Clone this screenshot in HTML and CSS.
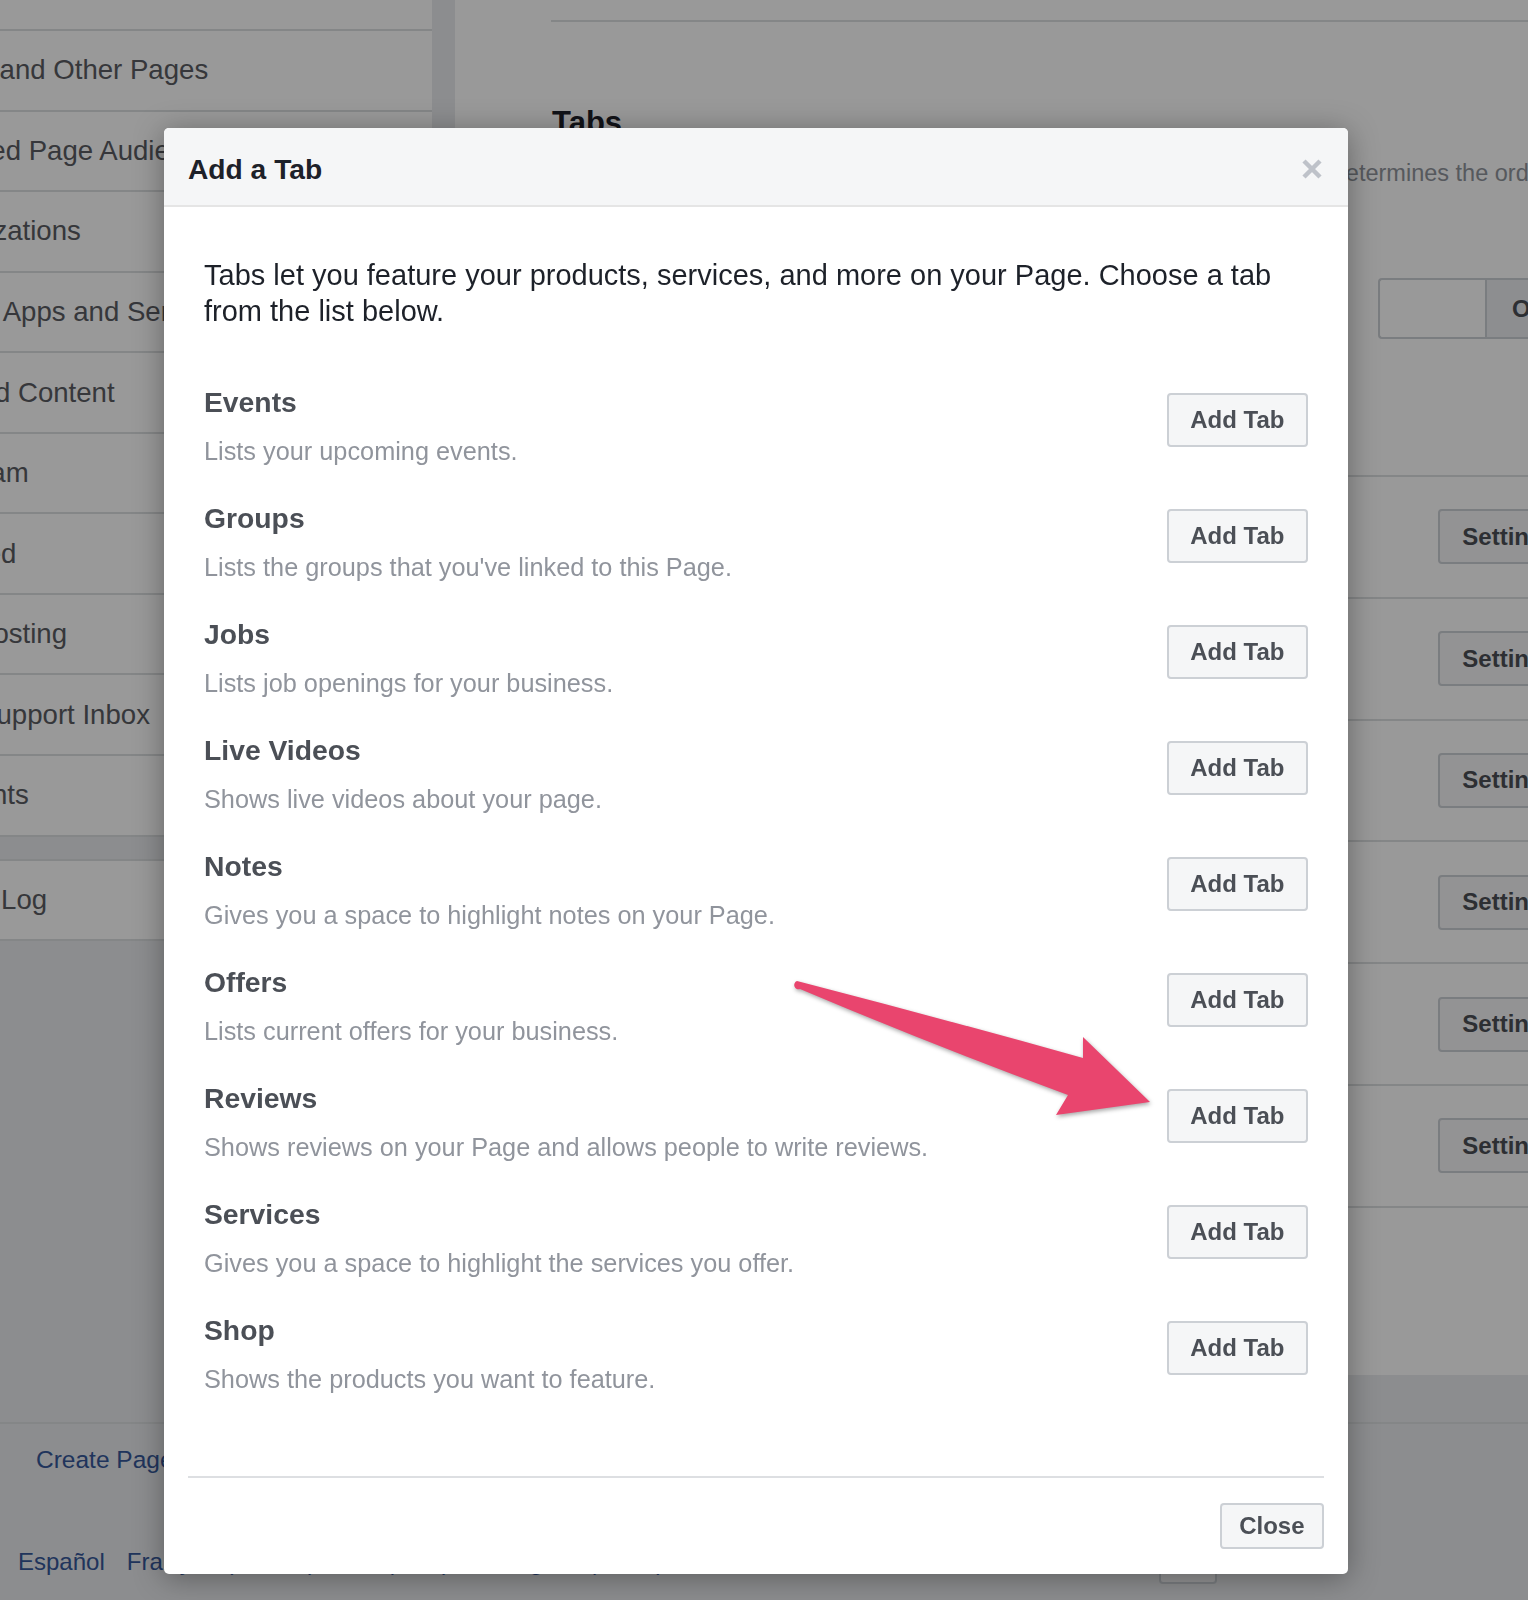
FILE: index.html
```html
<!DOCTYPE html>
<html lang="en">
<head>
    <meta charset="UTF-8">
    <meta name="viewport" content="width=device-width, initial-scale=1.0">
    <title>Page Settings - Add a Tab</title>
    <link rel="stylesheet" href="styles.css">
</head>
<body>
    <div class="page">
        <aside class="sidebar">
            <ul class="side-box">
                <li class="side-item">Page Roles</li>
                <li class="side-item">People and Other Pages</li>
                <li class="side-item">Preferred Page Audience</li>
                <li class="side-item">Authorizations</li>
                <li class="side-item">Partner Apps and Services</li>
                <li class="side-item">Branded Content</li>
                <li class="side-item">Instagram</li>
                <li class="side-item">Featured</li>
                <li class="side-item">Crossposting</li>
                <li class="side-item">Page Support Inbox</li>
                <li class="side-item">Payments</li>
            </ul>
            <ul class="side-box side-box-last">
                <li class="side-item">Activity Log</li>
            </ul>
        </aside>

        <main class="panel">
            <div class="panel-top"></div>
            <h2 class="panel-title">Tabs</h2>
            <p class="panel-desc">Drag and drop the tabs below to change their order. The order of your tabs determines the order of tabs on your Page.</p>
            <div class="default-tabs">
                <span class="default-field"></span>
                <button class="default-btn">On</button>
            </div>
            <ul class="tab-rows">
                <li class="tab-row"><span class="tab-name">Home</span><button class="btn btn-settings">Settings</button></li>
                <li class="tab-row"><span class="tab-name">Posts</span><button class="btn btn-settings">Settings</button></li>
                <li class="tab-row"><span class="tab-name">Photos</span><button class="btn btn-settings">Settings</button></li>
                <li class="tab-row"><span class="tab-name">Videos</span><button class="btn btn-settings">Settings</button></li>
                <li class="tab-row"><span class="tab-name">About</span><button class="btn btn-settings">Settings</button></li>
                <li class="tab-row"><span class="tab-name">Community</span><button class="btn btn-settings">Settings</button></li>
            </ul>
        </main>
    </div>

    <footer class="site-footer">
        <div class="footer-inner">
            <div class="footer-links">
                <a>Create Page</a>
                <a>Create Ad</a>
                <a>Developers</a>
                <a>Careers</a>
                <a>Privacy</a>
                <a>Cookies</a>
            </div>
            <div class="lang-row">
                <a>Español</a>
                <a>Français (France)</a>
                <a>中文(简体)</a>
                <a>Português (Brasil)</a>
                <a>Italiano</a>
                <a>Deutsch</a>
                <button class="lang-add">
                    <svg width="28" height="28" viewBox="0 0 28 28"><path d="M14 2v24M2 14h24" stroke="#4b4f56" stroke-width="3"/></svg>
                </button>
            </div>
        </div>
    </footer>

    <div class="overlay"></div>

    <div class="modal">
        <div class="modal-header">
            <h3 class="modal-title">Add a Tab</h3>
            <button class="modal-x" aria-label="Close">
                <svg width="20" height="20" viewBox="0 0 20 20"><path d="M2 2L18 18M18 2L2 18" stroke="#bec2c9" stroke-width="4.5"/></svg>
            </button>
        </div>
        <div class="modal-body">
            <p class="intro">Tabs let you feature your products, services, and more on your Page. Choose a tab from the list below.</p>
            <ul class="tab-list">
                <li class="tab-option">
                    <div><div class="tab-label">Events</div><div class="tab-help">Lists your upcoming events.</div></div>
                    <button class="btn btn-add">Add Tab</button>
                </li>
                <li class="tab-option">
                    <div><div class="tab-label">Groups</div><div class="tab-help">Lists the groups that you've linked to this Page.</div></div>
                    <button class="btn btn-add">Add Tab</button>
                </li>
                <li class="tab-option">
                    <div><div class="tab-label">Jobs</div><div class="tab-help">Lists job openings for your business.</div></div>
                    <button class="btn btn-add">Add Tab</button>
                </li>
                <li class="tab-option">
                    <div><div class="tab-label">Live Videos</div><div class="tab-help">Shows live videos about your page.</div></div>
                    <button class="btn btn-add">Add Tab</button>
                </li>
                <li class="tab-option">
                    <div><div class="tab-label">Notes</div><div class="tab-help">Gives you a space to highlight notes on your Page.</div></div>
                    <button class="btn btn-add">Add Tab</button>
                </li>
                <li class="tab-option">
                    <div><div class="tab-label">Offers</div><div class="tab-help">Lists current offers for your business.</div></div>
                    <button class="btn btn-add">Add Tab</button>
                </li>
                <li class="tab-option">
                    <div><div class="tab-label">Reviews</div><div class="tab-help">Shows reviews on your Page and allows people to write reviews.</div></div>
                    <button class="btn btn-add">Add Tab</button>
                </li>
                <li class="tab-option">
                    <div><div class="tab-label">Services</div><div class="tab-help">Gives you a space to highlight the services you offer.</div></div>
                    <button class="btn btn-add">Add Tab</button>
                </li>
                <li class="tab-option">
                    <div><div class="tab-label">Shop</div><div class="tab-help">Shows the products you want to feature.</div></div>
                    <button class="btn btn-add">Add Tab</button>
                </li>
            </ul>
        </div>
        <div class="modal-footer">
            <button class="btn btn-close">Close</button>
        </div>
    </div>

    <!-- annotation arrow pointing at the Reviews button -->
    <svg class="arrow" width="390" height="170" viewBox="0 0 390 170">
        <path d="M17 21 Q160 58 303 98 L303 77 L370 142 L276 155 L288 135 Q150 84 20 29 A4 4 0 0 1 17 21 Z" fill="#e9456e"/>
    </svg>
</body>
</html>
```

FILE: styles.css
```css
* {
    margin: 0;
    padding: 0;
    box-sizing: border-box;
}

html, body {
    overflow: hidden;
}

body {
    font-family: "Liberation Sans", Arial, sans-serif;
    background: #e9ebee;
    width: 1528px;
    height: 1600px;
    position: relative;
}

ul {
    list-style: none;
}

button {
    font-family: inherit;
    cursor: pointer;
}

/* page behind the dialog */

.page {
    display: flex;
    width: 1620px;
    height: 1375px;
}

.sidebar {
    width: 526px;
    margin-left: -94px;
    margin-top: -49.6px;
    flex-shrink: 0;
}

.side-box {
    background: #fff;
}

.side-item {
    height: 80.57px;
    border-bottom: 2px solid #dddfe2;
    display: flex;
    align-items: center;
    font-size: 27.6px;
    color: #5a5d63;
    white-space: nowrap;
}

.side-box-last {
    margin-top: 22.3px;
    border-top: 2px solid #dddfe2;
}

.side-box-last .side-item {
    height: 80px;
}

.panel {
    flex: 1;
    margin-left: 23px;
    background: #fff;
    padding: 0 39px 0 97px;
    white-space: nowrap;
    overflow: hidden;
}

.panel-top {
    height: 22px;
    border-bottom: 2px solid #dddfe2;
    margin-left: -1px;
}

.panel-title {
    margin-top: 81px;
    font-size: 31px;
    line-height: 40px;
    color: #1d2129;
}

.panel-desc {
    margin-top: 14px;
    font-size: 23.5px;
    line-height: 32px;
    color: #90949c;
}

.default-tabs {
    margin-top: 89px;
    height: 61px;
    display: flex;
    justify-content: flex-end;
}

.default-field {
    width: 107px;
    background: #fff;
    border: 2px solid #ccd0d5;
    border-right: none;
    border-radius: 4px 0 0 4px;
}

.default-btn {
    width: 96px;
    background: #ebedf0;
    border: 2px solid #ccd0d5;
    border-radius: 0 4px 4px 0;
    font-size: 24px;
    font-weight: bold;
    color: #4b4f56;
    text-align: left;
    padding-left: 25px;
}

.tab-rows {
    margin-top: 136px;
}

.tab-row {
    height: 121.8px;
    border-top: 2px solid #dddfe2;
    display: flex;
    align-items: center;
    justify-content: space-between;
    font-size: 26px;
    color: #1d2129;
}

.tab-row:last-child {
    height: 123.8px;
    border-bottom: 2px solid #dddfe2;
}

.btn {
    background: #f5f6f7;
    border: 2px solid #ccd0d5;
    border-radius: 4px;
    color: #4b4f56;
    font-size: 24px;
    font-weight: bold;
    white-space: nowrap;
}

.btn-settings {
    height: 55px;
    padding: 0 22px;
}

.site-footer {
    width: 1620px;
    padding-top: 47px;
}

.footer-inner {
    border-top: 2px solid #dddfe2;
}

.footer-links {
    display: flex;
    gap: 22px;
    padding: 18px 0 0 36px;
    font-size: 24.5px;
    line-height: 36px;
    color: #365899;
}

.lang-row {
    margin-top: 62px;
    width: 1217px;
    height: 44px;
    padding-left: 18px;
    display: flex;
    align-items: center;
    gap: 22px;
    font-size: 24px;
    color: #365899;
    white-space: nowrap;
}

.lang-add {
    margin-left: auto;
    width: 58px;
    height: 44px;
    background: #f5f6f7;
    border: 2px solid #ccd0d5;
    border-radius: 4px;
    display: flex;
    align-items: center;
    justify-content: center;
}

.overlay {
    position: fixed;
    inset: 0;
    background: rgba(0, 0, 0, 0.4);
}

/* dialog */

.modal {
    position: absolute;
    left: 164px;
    top: 128px;
    width: 1184px;
    background: #fff;
    border-radius: 5px;
    box-shadow: 0 4px 30px rgba(0, 0, 0, 0.35);
    overflow: hidden;
}

.modal-header {
    display: flex;
    align-items: center;
    justify-content: space-between;
    background: #f5f6f7;
    border-bottom: 2px solid #e5e5e5;
    padding: 23px 26px 18px 24px;
}

.modal-title {
    font-size: 28.2px;
    line-height: 36px;
    font-weight: bold;
    color: #1d2129;
}

.modal-x {
    width: 20px;
    height: 20px;
    border: none;
    background: none;
    display: flex;
}

.modal-body {
    padding: 50px 40px 79px;
}

.intro {
    font-size: 29px;
    line-height: 36px;
    color: #1d2129;
}

.tab-list {
    margin-top: 55px;
    display: flex;
    flex-direction: column;
    gap: 31px;
}

.tab-option {
    display: flex;
    justify-content: space-between;
    align-items: flex-start;
}

.tab-label {
    font-size: 28.3px;
    line-height: 36px;
    font-weight: bold;
    color: #4b4f56;
}

.tab-help {
    margin-top: 13px;
    font-size: 25.3px;
    line-height: 36px;
    color: #90949c;
}

.btn-add {
    margin-top: 9px;
    height: 54px;
    padding: 0 21.5px;
}

.modal-footer {
    margin: 0 24px;
    border-top: 2px solid #dddfe2;
    padding: 25px 0;
    display: flex;
    justify-content: flex-end;
}

.btn-close {
    height: 46px;
    padding: 0 17.5px;
}

.arrow {
    position: absolute;
    left: 780px;
    top: 960px;
    overflow: visible;
    filter: drop-shadow(1px 2px 2px rgba(0, 0, 0, 0.35));
}
```
